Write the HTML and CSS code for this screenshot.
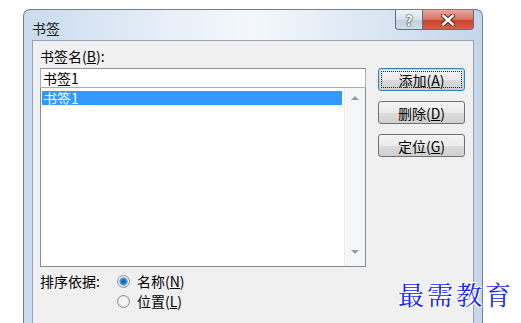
FILE: index.html
```html
<!DOCTYPE html>
<html lang="zh-CN">
<head>
    <meta charset="UTF-8">
    <title>书签</title>
    <link rel="stylesheet" href="styles.css">
</head>
<body>
    <div class="janela">
        <div class="titulo">
            <span class="titulo-texto">书签</span>
            <div class="controles">
                <button class="ajuda">?</button>
                <button class="fechar">
                    <svg width="14" height="12" viewBox="0 0 14 12">
                        <path d="M2 1.5 L12 10.5 M12 1.5 L2 10.5" stroke="#5a2018" stroke-width="4.5" stroke-linecap="round"/>
                        <path d="M2 1.5 L12 10.5 M12 1.5 L2 10.5" stroke="#fff" stroke-width="2.5" stroke-linecap="round"/>
                    </svg>
                </button>
            </div>
        </div>

        <div class="cliente">
            <div class="principal">
                <div class="esquerda">
                    <div class="rotulo">书签名(<u>B</u>):</div>
                    <div class="entrada">书签1</div>
                    <div class="lista">
                        <div class="itens">
                            <div class="item selecionado">书签1</div>
                        </div>
                        <div class="rolagem">
                            <span class="seta cima"></span>
                            <span class="seta baixo"></span>
                        </div>
                    </div>
                </div>
                <div class="botoes">
                    <button class="btn padrao">添加(<u>A</u>)</button>
                    <button class="btn">删除(<u>D</u>)</button>
                    <button class="btn">定位(<u>G</u>)</button>
                </div>
            </div>

            <div class="ordem">
                <div class="ordem-rotulo">排序依据:</div>
                <div class="opcoes">
                    <div class="opcao"><span class="radio marcado"></span>名称(<u>N</u>)</div>
                    <div class="opcao"><span class="radio"></span>位置(<u>L</u>)</div>
                </div>
            </div>
        </div>
    </div>

    <div class="marca">最需教育</div>
</body>
</html>
```

FILE: styles.css
```css
* {
    box-sizing: border-box;
    font-family: "Noto Sans CJK SC", "Liberation Sans", sans-serif;
}
html, body {
    margin: 0;
    height: 323px;
    overflow: hidden;
    background: #fff;
}
body {
    position: relative;
}
u {
    text-decoration: underline;
}

/* moldura da janela */
.janela {
    margin: 9px 0 0 23px;
    width: 460px;
    height: 314px;
    border: 1px solid #6e7f92;
    border-bottom: 0;
    border-radius: 7px 7px 0 0;
    padding: 0 8px;
    background: linear-gradient(to right, #c9dbee, #e6eef7 30%, #f4f8fc 50%, #dce7f3 75%, #c3d6ea);
}
.titulo {
    height: 30px;
    display: flex;
    align-items: flex-start;
}
.titulo-texto {
    font-size: 14px;
    line-height: 14px;
    margin-top: 11px;
    color: #1b1b1b;
}
.controles {
    margin-left: auto;
    display: flex;
}
.controles button {
    height: 20px;
    margin: 0;
    padding: 0;
    border: 1px solid #5f6e80;
    border-top: 0;
    cursor: pointer;
}
.ajuda {
    width: 28px;
    border-radius: 0 0 0 4px;
    background: linear-gradient(#eef3f8, #d8e1ea 50%, #c3cfdc 51%, #d3dde8);
    color: #fff;
    font-size: 14px;
    font-weight: bold;
    line-height: 18px;
    text-shadow: 0 0 1px #3c4856, 0 0 1px #3c4856, 0 0 2px #3c4856;
}
.fechar {
    width: 51px;
    border-left: 0 !important;
    border-radius: 0 0 4px 0;
    background: linear-gradient(#e9a99b, #d8705e 50%, #c7402c 51%, #d65f47);
    display: flex;
    align-items: center;
    justify-content: center;
}

/* area cliente */
.cliente {
    height: 283px;
    background: #f0f0f0;
    border: 1px solid #95a3b2;
    border-bottom: 0;
    padding: 7px 7px 0 7px;
    color: #000;
    font-size: 14px;
}
.principal {
    display: flex;
    gap: 12px;
}
.esquerda {
    width: 326px;
}
.rotulo {
    height: 16px;
    line-height: 16px;
}
.entrada {
    margin-top: 4px;
    height: 20px;
    border: 1px solid #a5acb5;
    border-top-color: #8c939c;
    background: #fff;
    line-height: 18px;
    padding-left: 2px;
}
.lista {
    height: 179px;
    border: 1px solid #838b95;
    border-top: 0;
    background: #fff;
    display: flex;
}
.itens {
    flex: 1;
    padding: 3px 2px 0 1px;
}
.item {
    height: 14px;
    line-height: 14px;
    padding-left: 1px;
}
.selecionado {
    background: #3399ff;
    color: #fff;
}
.rolagem {
    width: 21px;
    background: #f6f6f6;
    border-left: 1px solid #ececec;
    display: flex;
    flex-direction: column;
    justify-content: space-between;
    align-items: center;
    padding: 8px 0 12px;
}
.seta {
    width: 0;
    height: 0;
    border-left: 4px solid transparent;
    border-right: 4px solid transparent;
}
.cima {
    border-bottom: 4px solid #9a9a9a;
}
.baixo {
    border-top: 4px solid #9a9a9a;
}

/* botoes */
.botoes {
    margin-top: 20px;
    display: flex;
    flex-direction: column;
    gap: 10px;
}
.btn {
    width: 87px;
    height: 23px;
    margin: 0;
    padding: 0;
    border: 1px solid #707070;
    border-radius: 3px;
    background: linear-gradient(#f4f4f4, #ebebeb 50%, #dcdcdc 51%, #d0d0d0);
    font-size: 14px;
    line-height: 20px;
    color: #000;
    cursor: pointer;
}
.padrao {
    border-color: #3c7fb1;
    box-shadow: inset 0 0 0 1px #a9dcf4;
    outline: 1px dotted #222;
    outline-offset: -4px;
}

/* ordenacao */
.ordem {
    margin-top: 4px;
    display: flex;
}
.ordem-rotulo {
    width: 77px;
    height: 20px;
    line-height: 20px;
}
.opcao {
    height: 20px;
    line-height: 20px;
    display: flex;
    align-items: center;
}
.radio {
    width: 13px;
    height: 13px;
    border-radius: 50%;
    border: 1px solid #8e8f8f;
    background: radial-gradient(#ffffff, #e3e3e3);
    margin-right: 7px;
}
.marcado {
    background: radial-gradient(circle, #0c5fa0 0, #1b80cf 2.5px, #7ab6e6 4px, #f4f4f4 4.6px);
}

/* marca d'agua */
.marca {
    position: absolute;
    left: 398px;
    top: 275px;
    font-size: 26px;
    letter-spacing: 3px;
    color: #1426ff;
    text-shadow: 1px 1px 0 #fff, -1px -1px 0 #fff, 1px -1px 0 #fff, -1px 1px 0 #fff;
    font-family: "Noto Serif CJK SC", "Noto Sans CJK SC", serif;
}
```
